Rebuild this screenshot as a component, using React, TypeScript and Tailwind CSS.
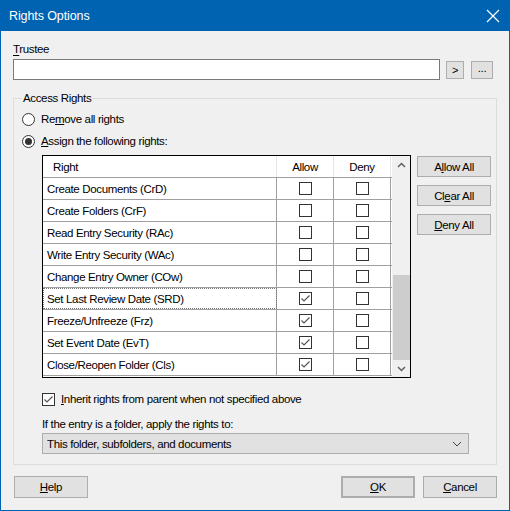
import React from "react"

const font = { fontFamily: '"Liberation Sans", Arial, sans-serif' }

const rows: { name: string; allow: boolean }[] = [
  { name: "Create Documents (CrD)", allow: false },
  { name: "Create Folders (CrF)", allow: false },
  { name: "Read Entry Security (RAc)", allow: false },
  { name: "Write Entry Security (WAc)", allow: false },
  { name: "Change Entry Owner (COw)", allow: false },
  { name: "Set Last Review Date (SRD)", allow: true },
  { name: "Freeze/Unfreeze (Frz)", allow: true },
  { name: "Set Event Date (EvT)", allow: true },
  { name: "Close/Reopen Folder (Cls)", allow: true },
]

function Check({ checked }: { checked: boolean }) {
  return (
    <div className="w-[13px] h-[13px] border border-[#333] bg-white flex items-center justify-center">
      {checked && (
        <svg width="11" height="11" viewBox="0 0 11 11">
          <path d="M1.5 5.5 L4 8 L9.5 2.5" fill="none" stroke="#555" strokeWidth="1.2" />
        </svg>
      )}
    </div>
  )
}

function Radio({ on }: { on: boolean }) {
  return (
    <div className="w-[13px] h-[13px] rounded-full border border-[#333] bg-white flex items-center justify-center">
      {on && <div className="w-[7px] h-[7px] rounded-full bg-[#333]" />}
    </div>
  )
}

function Btn({ children, className = "" }: { children: React.ReactNode; className?: string }) {
  return (
    <div
      className={`flex items-center justify-center bg-[#e1e1e1] border border-[#adadad] text-black ${className}`}
    >
      {children}
    </div>
  )
}

export default function App() {
  return (
    <div
      style={font}
      className="w-[510px] h-[511px] flex flex-col bg-[#0063b1] text-[11.5px] leading-[14px] tracking-[-0.35px] text-black"
    >
      {/* title bar */}
      <div className="h-[31px] flex items-center justify-between pl-[9px] pr-[10px] text-white">
        <span className="text-[12.5px] tracking-[-0.1px]">Rights Options</span>
        <svg width="14" height="14" viewBox="0 0 14 14">
          <path d="M1 1 L13 13 M13 1 L1 13" stroke="white" strokeWidth="1.2" />
        </svg>
      </div>

      <div className="flex-1 mx-[1px] mb-[1px] bg-[#f0f0f0] flex flex-col px-[12px]">
        {/* trustee */}
        <div className="mt-[11px]">
          <span className="underline underline-offset-2">T</span>rustee
        </div>
        <div className="mt-[3px] flex items-center">
          <div className="w-[427px] h-[21px] bg-white border border-[#7a7a7a]" />
          <Btn className="ml-[6px] w-[18px] h-[18px] text-[11px]">&gt;</Btn>
          <Btn className="ml-[7px] w-[22px] h-[18px] pb-[4px]">...</Btn>
        </div>

        {/* access rights group */}
        <div className="mt-[18px] h-[367px] border border-[#dcdcdc] relative flex flex-col pl-[8px]">
          <span className="absolute -top-[8px] left-[8px] bg-[#f0f0f0] px-[1px]">Access Rights</span>
          <div className="mt-[13px] flex items-center gap-[6px]">
            <Radio on={false} />
            <span>
              Re<span className="underline">m</span>ove all rights
            </span>
          </div>
          <div className="mt-[8px] flex items-center gap-[6px]">
            <Radio on={true} />
            <span>
              <span className="underline">A</span>ssign the following rights:
            </span>
          </div>

          <div className="mt-[7px] ml-[20px] flex items-start">
            {/* grid */}
            <div className="w-[369px] h-[223px] border border-black bg-[#f0f0f0] flex">
              <div className="w-[349px] flex flex-col bg-white">
                <div className="h-[22px] flex border-b border-[#a0a0a0]">
                  <div className="w-[234px] pl-[10px] flex items-center border-r border-[#e5e5e5]">Right</div>
                  <div className="w-[57px] flex items-center justify-center border-r border-[#e5e5e5]">Allow</div>
                  <div className="w-[57px] flex items-center justify-center border-r border-[#e5e5e5]">Deny</div>
                </div>
                {rows.map((r, i) => (
                  <div key={i} className="h-[22px] flex border-b border-[#a0a0a0]">
                    <div
                      className={`w-[234px] pl-[4px] flex items-center border-r border-[#a0a0a0] ${
                        i === 5 ? "outline-1 outline-dotted outline-[#777] -outline-offset-1" : ""
                      }`}
                    >
                      {r.name}
                    </div>
                    <div className="w-[57px] flex items-center justify-center border-r border-[#a0a0a0]">
                      <Check checked={r.allow} />
                    </div>
                    <div className="w-[57px] flex items-center justify-center border-r border-[#a0a0a0]">
                      <Check checked={false} />
                    </div>
                  </div>
                ))}
              </div>
              {/* scrollbar */}
              <div className="w-[18px] flex flex-col items-center">
                <div className="h-[18px] flex items-center justify-center">
                  <svg width="9" height="6" viewBox="0 0 9 6">
                    <path d="M1 5 L4.5 1.5 L8 5" fill="none" stroke="#606060" strokeWidth="1.5" />
                  </svg>
                </div>
                <div className="flex-1 w-[17px] flex flex-col">
                  <div className="h-[102px]" />
                  <div className="h-[85px] bg-[#cdcdcd]" />
                </div>
                <div className="h-[18px] flex items-center justify-center">
                  <svg width="9" height="6" viewBox="0 0 9 6">
                    <path d="M1 1 L4.5 4.5 L8 1" fill="none" stroke="#606060" strokeWidth="1.5" />
                  </svg>
                </div>
              </div>
            </div>

            {/* side buttons */}
            <div className="ml-[6px] mt-[1px] flex flex-col gap-[8px]">
              <Btn className="w-[74px] h-[21px]">
                <span>
                  A<span className="underline">l</span>low All
                </span>
              </Btn>
              <Btn className="w-[74px] h-[21px]">
                <span>
                  Cl<span className="underline">e</span>ar All
                </span>
              </Btn>
              <Btn className="w-[74px] h-[21px]">
                <span>
                  <span className="underline">D</span>eny All
                </span>
              </Btn>
            </div>
          </div>

          <div className="mt-[14px] ml-[20px] flex items-center gap-[6px]">
            <Check checked={true} />
            <span>
              <span className="underline">I</span>nherit rights from parent when not specified above
            </span>
          </div>
          <div className="mt-[11px] ml-[20px]">
            If the entry is a <span className="underline">f</span>older, apply the rights to:
          </div>
          <div className="mt-[2px] ml-[20px] w-[427px] h-[21px] bg-[#e1e1e1] border border-[#adadad] flex items-center justify-between pl-[4px] pr-[6px]">
            <span>This folder, subfolders, and documents</span>
            <svg width="10" height="6" viewBox="0 0 10 6">
              <path d="M1 1 L5 5 L9 1" fill="none" stroke="#444" strokeWidth="1" />
            </svg>
          </div>
        </div>

        {/* footer */}
        <div className="mt-[11px] flex items-center">
          <Btn className="w-[74px] h-[22px] ml-[1px]">
            <span>
              <span className="underline">H</span>elp
            </span>
          </Btn>
          <div className="flex-1" />
          <Btn className="w-[74px] h-[22px] border-2 border-[#0078d7]">
            <span>
              <span className="underline">O</span>K
            </span>
          </Btn>
          <Btn className="w-[74px] h-[22px] ml-[8px]">
            <span>
              <span className="underline">C</span>ancel
            </span>
          </Btn>
        </div>
      </div>
    </div>
  )
}
